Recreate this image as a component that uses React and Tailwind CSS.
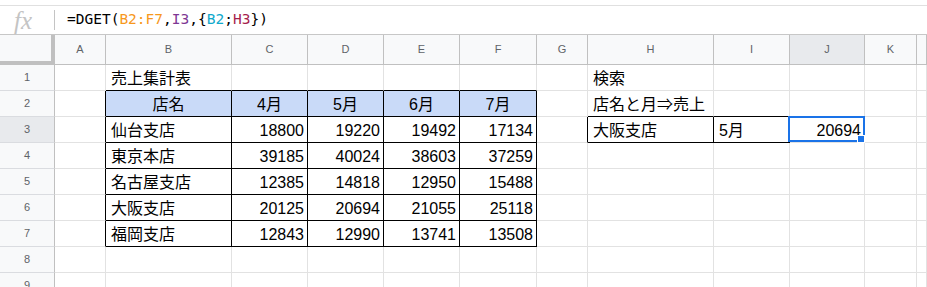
import React from 'react';

const COLS = ['A', 'B', 'C', 'D', 'E', 'F', 'G', 'H', 'I', 'J', 'K', ''];

// row -> { colIndex: [text, align] }
const DATA = {
  1: { 1: ['売上集計表', 'l'], 7: ['検索', 'l'] },
  2: { 1: ['店名', 'c'], 2: ['4月', 'c'], 3: ['5月', 'c'], 4: ['6月', 'c'], 5: ['7月', 'c'], 7: ['店名と月⇒売上', 'l'] },
  3: { 1: ['仙台支店', 'l'], 2: ['18800'], 3: ['19220'], 4: ['19492'], 5: ['17134'], 7: ['大阪支店', 'l'], 8: ['5月', 'l'], 9: ['20694'] },
  4: { 1: ['東京本店', 'l'], 2: ['39185'], 3: ['40024'], 4: ['38603'], 5: ['37259'] },
  5: { 1: ['名古屋支店', 'l'], 2: ['12385'], 3: ['14818'], 4: ['12950'], 5: ['15488'] },
  6: { 1: ['大阪支店', 'l'], 2: ['20125'], 3: ['20694'], 4: ['21055'], 5: ['25118'] },
  7: { 1: ['福岡支店', 'l'], 2: ['12843'], 3: ['12990'], 4: ['13741'], 5: ['13508'] },
};

const ROWS = [1, 2, 3, 4, 5, 6, 7, 8, 9];

function Cell({ r, c }) {
  const rightBlack = (r >= 2 && r <= 7 && c >= 0 && c <= 5) || (r === 3 && c >= 6 && c <= 8);
  const bottomBlack = (r >= 1 && r <= 7 && c >= 1 && c <= 5) || (r >= 2 && r <= 3 && c >= 7 && c <= 8);
  const blue = r === 2 && c >= 1 && c <= 5;
  const entry = DATA[r] && DATA[r][c];
  const align = entry ? (entry[1] === 'l' ? 'justify-start pl-[5px]' : entry[1] === 'c' ? 'justify-center' : 'justify-end pr-[3px]') : '';
  return (
    <div
      className={`relative flex h-[26px] items-center border-r border-b pt-[2px] text-[16px] text-black whitespace-nowrap ${rightBlack ? 'border-r-black' : 'border-r-[#e2e2e2]'} ${bottomBlack ? 'border-b-black' : 'border-b-[#e2e2e2]'} ${blue ? 'bg-[#c9daf8]' : 'bg-white'} ${align}`}
    >
      {entry ? entry[0] : null}
      {r === 3 && c === 9 && (
        <div className="absolute z-10 -left-[2px] -top-[1px] -right-[1px] bottom-0 border-2 border-[#1a73e8]">
          <div className="absolute -right-[2px] -bottom-[3px] h-[8px] w-[8px] bg-[#1a73e8] border border-white" />
        </div>
      )}
    </div>
  );
}

export default function App() {
  return (
    <div className="h-[287px] w-[927px] overflow-hidden bg-white" style={{ fontFamily: '"Liberation Sans", "Noto Sans CJK JP", sans-serif' }}>
      <div className="h-[5px]" />
      <div className="flex h-[30px] items-center border-t border-b border-t-[#e0e0e0] border-b-[#c7c7c7]">
        <div className="flex w-[54px] items-center">
          <span className="ml-[14px] italic text-[25px] leading-none text-[#c4c4c4]" style={{ fontFamily: '"Liberation Serif", serif' }}>fx</span>
        </div>
        <div className="h-[20px] w-px bg-[#c4c4c4]" />
        <div className="ml-[12px] text-[14.5px] text-black" style={{ fontFamily: '"DejaVu Sans Mono", monospace' }}>
          =DGET(<span className="text-[#f7981d]">B2:F7</span>,<span className="text-[#7e3794]">I3</span>,{'{'}<span className="text-[#11a9cc]">B2</span>;<span className="text-[#a61d4c]">H3</span>{'}'})
        </div>
      </div>
      <div className="grid grid-cols-[55px_51px_126px_76px_76px_76px_77px_51px_126px_76px_75px_52px_1fr]">
        <div className="h-[30px] border-r-4 border-b-4 border-[#c0c0c0] bg-[#f8f9fa]" />
        {COLS.map((name, i) => (
          <div
            key={name + i}
            className={`flex h-[30px] items-center justify-center border-r border-b border-[#c0c0c0] text-[11px] text-[#5f6368] ${i === 9 ? 'bg-[#e8eaed]' : 'bg-[#f8f9fa]'}`}
          >
            {name}
          </div>
        ))}
        {ROWS.map((r) => (
          <React.Fragment key={r}>
            <div
              className={`flex h-[26px] items-center justify-center border-r border-b border-r-[#c0c0c0] border-b-[#dadce0] text-[11px] text-[#5f6368] ${r === 3 ? 'bg-[#e8eaed]' : 'bg-[#f8f9fa]'}`}
            >
              {r}
            </div>
            {COLS.map((_, c) => (
              <Cell key={c} r={r} c={c} />
            ))}
          </React.Fragment>
        ))}
      </div>
    </div>
  );
}
